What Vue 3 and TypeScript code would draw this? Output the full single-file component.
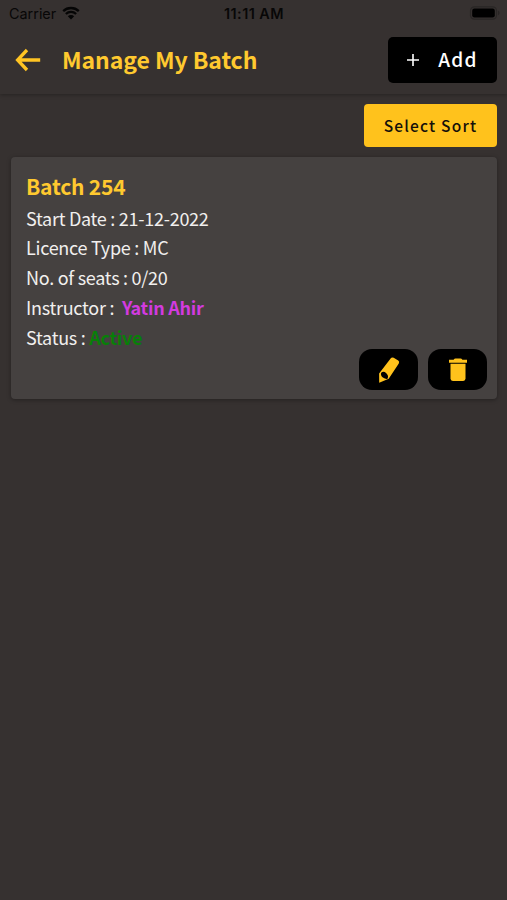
<script setup lang="ts">
interface Batch {
  name: string
  startDate: string
  licence: string
  seats: string
  instructor: string
  status: string
}

const batches: Batch[] = [
  {
    name: 'Batch 254',
    startDate: '21-12-2022',
    licence: 'MC',
    seats: '0/20',
    instructor: 'Yatin Ahir',
    status: 'Active',
  },
]
</script>

<template>
  <div class="screen">
    <header class="top">
      <div class="status-bar">
        <div class="carrier">
          <span>Carrier</span>
          <svg class="wifi" width="18" height="14" viewBox="0 0 18 14">
            <path d="M1.2 5.1A11.4 11.4 0 0 1 16.8 5.1M3.9 8A7.4 7.4 0 0 1 14.1 8" fill="none" stroke="#050505" stroke-width="2.3" />
            <path d="M9 13.6 5.8 10.3A4.6 4.6 0 0 1 12.2 10.3Z" fill="#050505" />
          </svg>
        </div>
        <span class="time">11:11 AM</span>
        <svg class="battery" width="32" height="14" viewBox="0 0 32 14">
          <rect x="1.5" y=".9" width="26" height="12.2" rx="3.8" fill="none" stroke="#292625" stroke-width="1.2" />
          <rect x="3.2" y="2.6" width="22.6" height="8.8" rx="2.2" fill="#000" />
          <path d="M29 4.8C31 5.4 31 8.6 29 9.2Z" fill="#292625" />
        </svg>
      </div>
      <div class="nav">
        <svg class="back" width="26" height="24" viewBox="0 0 26 24">
          <path d="M12 2 2.6 12 12 22M3 12H25.2" fill="none" stroke="#ffc423" stroke-width="3.3" />
        </svg>
        <h1>Manage My Batch</h1>
        <button class="add">
          <svg width="12" height="12" viewBox="0 0 12 12">
            <path d="M6 0V12M0 6H12" stroke="#fff" stroke-width="1.6" />
          </svg>
          <span>Add</span>
        </button>
      </div>
    </header>
    <div class="tools">
      <button class="sort"><span>Select Sort</span></button>
    </div>
    <main>
      <article v-for="b in batches" :key="b.name" class="card">
        <h2>{{ b.name }}</h2>
        <p>Start Date : {{ b.startDate }}</p>
        <p>Licence Type : {{ b.licence }}</p>
        <p>No. of seats : {{ b.seats }}</p>
        <p>Instructor : <b class="instructor">{{ b.instructor }}</b></p>
        <p>Status : <b class="active">{{ b.status }}</b></p>
        <div class="actions">
          <button aria-label="Edit">
            <svg width="24" height="28" viewBox="0 0 24 28">
              <path d="M13.6 2.5Q14.8.8 16.7 1.8L21.2 4.6Q22.8 5.8 21.8 7.4L11.7 22.7 2.2 26.7 2.1 17.6Z" fill="#ffc21c" />
              <path d="M4.2 16.7Q6.5 14.5 9.3 17.2Q12.2 20 10.3 22.9Q8.4 23.3 5.9 21.5Q3.2 19.5 4.2 16.7Z" fill="#000" />
            </svg>
          </button>
          <button aria-label="Delete">
            <svg width="18" height="24" viewBox="0 0 18 24">
              <path d="M0 1.8H4.6Q5.4.4 6.5.4H11.5Q12.6.4 13.4 1.8H18V4.8H0Z" fill="#ffc21c" />
              <path d="M1.5 5.8H16.5V20.5Q16.5 22.9 14.2 22.9H3.8Q1.5 22.9 1.5 20.5Z" fill="#ffc21c" />
            </svg>
          </button>
        </div>
      </article>
    </main>
  </div>
</template>

<style>
body {
  margin: 0;
  background: #363130;
}
</style>

<style scoped>
.screen {
  min-height: 900px;
  background: #363130;
  font-family: 'Noto Sans CJK SC', 'Noto Sans', sans-serif;
  color: #f1efee;
}
button {
  border: 0;
  padding: 0;
  font-family: inherit;
  display: flex;
  align-items: center;
  justify-content: center;
}
.top {
  height: 94px;
  box-shadow: 0 1px 4px rgba(0, 0, 0, 0.3);
}
.status-bar {
  height: 28px;
  display: grid;
  grid-template-columns: 1fr auto 1fr;
  align-items: center;
  padding: 0 6px 0 9px;
  font: 14.4px Inter, sans-serif;
  color: #080707;
}
.carrier {
  display: flex;
  align-items: center;
  gap: 6px;
}
.carrier span,
.time {
  margin-top: -2px;
}
.wifi {
  margin-top: -2px;
}
.time {
  font-weight: 600;
  letter-spacing: 0.45px;
  margin-left: -2px;
}
.battery {
  justify-self: end;
  margin-top: -2px;
}
.nav {
  height: 64px;
  display: flex;
  align-items: center;
  padding: 0 10px 0 15px;
}
h1 {
  margin: -2px 0 0 21px;
  flex: 1;
  font-size: 23px;
  line-height: 34px;
  font-weight: 700;
  letter-spacing: -0.07px;
  color: #ffc92f;
}
.add {
  width: 109px;
  height: 46px;
  border-radius: 5px;
  background: #000;
  color: #fff;
  font-size: 19px;
  font-weight: 500;
  letter-spacing: 1.2px;
  gap: 19px;
}
.add span {
  margin-top: -3px;
}
.tools {
  display: flex;
  justify-content: flex-end;
  padding: 9.5px 10px;
}
.sort {
  width: 133px;
  height: 43.5px;
  border-radius: 4px;
  background: #ffc21c;
  color: #14100a;
  font-size: 15.5px;
  font-weight: 500;
  letter-spacing: 1.2px;
}
.sort span {
  margin-top: -1px;
}
main {
  padding: 0 10px 0 11px;
}
.card {
  height: 242px;
  box-sizing: border-box;
  display: flex;
  flex-direction: column;
  padding: 13px 10px 9px 15px;
  border-radius: 4px;
  background: #454140;
  box-shadow: 0 1px 4px rgba(0, 0, 0, 0.35);
}
h2 {
  margin: 0 0 1px;
  font-size: 21px;
  line-height: 33px;
  font-weight: 700;
  letter-spacing: -0.2px;
  color: #ffc92f;
}
p {
  margin: 0;
  font-size: 18px;
  line-height: 29.75px;
  letter-spacing: -0.27px;
  white-space: pre;
}
.instructor {
  margin-left: 4px;
  color: #d23bdf;
}
.active {
  color: #087f08;
}
.actions {
  display: flex;
  justify-content: flex-end;
  gap: 10px;
  margin-top: -3px;
}
.actions button {
  width: 59px;
  height: 41px;
  border-radius: 13px;
  background: #000;
}
</style>
